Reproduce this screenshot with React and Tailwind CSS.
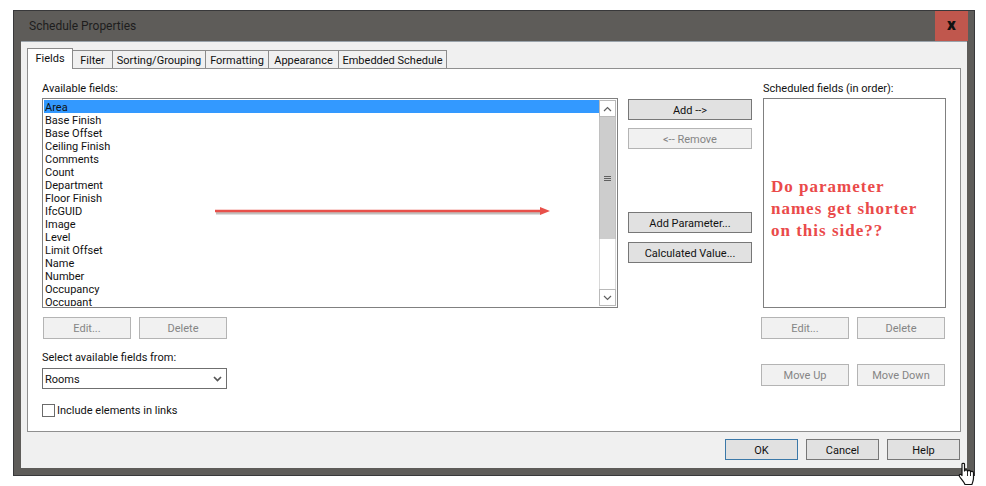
import React from 'react';

const fields = [
  'Area', 'Base Finish', 'Base Offset', 'Ceiling Finish', 'Comments', 'Count', 'Department', 'Floor Finish',
  'IfcGUID', 'Image', 'Level', 'Limit Offset', 'Name', 'Number', 'Occupancy', 'Occupant',
];

const tabs = [
  { label: 'Filter', width: 'w-[41px]' },
  { label: 'Sorting/Grouping', width: 'w-[94px]' },
  { label: 'Formatting', width: 'w-[64px]' },
  { label: 'Appearance', width: 'w-[71px]' },
  { label: 'Embedded Schedule', width: 'w-[109px]' },
];

function Btn({ children, disabled, primary, className = '' }) {
  const look = disabled
    ? 'bg-[#f1f1f1] border-[#b4b4b4] text-[#858585]'
    : primary
      ? 'bg-[#e1e1e1] border-[#3b78a8] text-[#111111]'
      : 'bg-[#e1e1e1] border-[#777777] text-[#111111]';
  return (
    <div className={`flex items-center justify-center border text-[11px] ${look} ${className}`}>
      {children}
    </div>
  );
}

function ScrollArrow({ d, className = '' }) {
  return (
    <div className={`flex items-center justify-center bg-white border border-[#b9b9b9] ${className}`}>
      <svg width="9" height="6" viewBox="0 0 9 6" fill="none" stroke="#606060" strokeWidth="1.2">
        <path d={d} />
      </svg>
    </div>
  );
}

export default function App() {
  return (
    <div
      className="relative w-[986px] h-[486px] overflow-hidden bg-white pt-[10px] pl-[13px] text-[#111111]"
      style={{ fontFamily: 'Roboto, sans-serif' }}
    >
      <div className="flex flex-col w-[962px] h-[466px] border border-[#38383a] bg-[#5e5c59]">
        {/* title bar */}
        <div className="flex justify-between h-[30px] shrink-0">
          <div className="pl-[15px] pt-[6px] text-[12px] leading-[18px] text-[#1d1d1d]">Schedule Properties</div>
          <div className="flex items-center justify-center w-[33px] h-[30px] mr-[6px] bg-[#c0574d] pb-[3px] text-[17px] font-black leading-none text-[#111111]">
            x
          </div>
        </div>

        {/* body */}
        <div className="flex flex-col h-[427px] mx-[7px] bg-[#f0f0f0] border-t border-[#9aa3ab] px-[6px]">
          <div className="flex items-end h-[26px] shrink-0 pl-0">
            <div className="relative z-10 flex items-start justify-center w-[46px] h-[21px] -mb-px border border-b-0 border-[#8b8b8b] bg-white pt-[2px] text-[11px]">
              Fields
            </div>
            {tabs.map((tab) => (
              <div
                key={tab.label}
                className={`flex items-center justify-center h-[18px] border border-b-0 border-[#8b8b8b] bg-[#f0f0f0] pt-[3px] text-[11px] whitespace-nowrap -ml-px first:ml-0 ${tab.width}`}
              >
                {tab.label}
              </div>
            ))}
          </div>

          {/* panel */}
          <div className="flex gap-[10px] w-[934px] h-[364px] shrink-0 border border-[#8f8f8f] bg-white pl-[14px] pt-[13px]">
            <div className="w-[576px] shrink-0">
              <div className="h-[16px] text-[11px] leading-[13px]">Available fields:</div>
              <div className="relative flex h-[210px] border border-[#808080] p-px overflow-hidden">
                <div className="flex-1 overflow-hidden text-[11px] leading-[15px]">
                  {fields.map((name, i) => (
                    <div key={name} className={`h-[13px] pl-px ${i === 0 ? 'bg-[#3399ff]' : ''}`}>
                      {name}
                    </div>
                  ))}
                </div>
                <div className="flex flex-col w-[17px] shrink-0">
                  <ScrollArrow d="M1 5 L4.5 1.5 L8 5" className="h-[17px]" />
                  <div className="flex flex-col items-center justify-center gap-px h-[122px] bg-[#cdcdcd] border-x border-[#c0c0c0]">
                    <div className="w-[7px] h-px bg-[#606060]" />
                    <div className="w-[7px] h-px bg-[#606060]" />
                    <div className="w-[7px] h-px bg-[#606060]" />
                  </div>
                  <div className="h-[50px] bg-white border-x border-[#d8d8d8]" />
                  <ScrollArrow d="M1 1 L4.5 4.5 L8 1" className="h-[17px]" />
                </div>
                {/* annotation arrow */}
                <svg className="absolute left-[172px] top-[105px]" width="340" height="16" viewBox="0 0 340 16">
                  <path d="M1 9 H326" stroke="#77706c" strokeOpacity="0.45" strokeWidth="3" />
                  <path d="M0 7 H326" stroke="#e8504a" strokeWidth="2.4" />
                  <path d="M325 3 L335 7 L325 11 Z" fill="#e8504a" />
                </svg>
              </div>
              <div className="flex gap-[8px] mt-[9px] ml-px">
                <Btn disabled className="w-[88px] h-[22px] pt-[2px]">Edit...</Btn>
                <Btn disabled className="w-[88px] h-[22px] pt-[2px]">Delete</Btn>
              </div>
              <div className="h-[16px] mt-[10px] text-[11px] leading-[18px]">Select available fields from:</div>
              <div className="flex items-center justify-between w-[185px] h-[21px] mt-[3px] border border-[#6f6f6f] bg-white pl-[2px] pr-[4px] text-[11px]">
                <span className="pt-[3px]">Rooms</span>
                <svg width="9" height="6" viewBox="0 0 9 6" fill="none" stroke="#555555" strokeWidth="1.7">
                  <path d="M1 1 L4.5 4.5 L8 1" />
                </svg>
              </div>
              <div className="flex items-center gap-[2px] mt-[14px] text-[11px] leading-[14px]">
                <span className="w-[13px] h-[13px] border border-[#6b6b6b] bg-white" />
                <span className="pt-px">Include elements in links</span>
              </div>
            </div>

            <div className="w-[124px] shrink-0 pt-[17px]">
              <Btn className="h-[21px] pt-[3px]">Add --&gt;</Btn>
              <Btn disabled className="h-[21px] mt-[8px] pt-[3px]">&lt;-- Remove</Btn>
              <Btn className="h-[21px] mt-[63px] pt-[3px]">Add Parameter...</Btn>
              <Btn className="h-[21px] mt-[9px] pt-[3px]">Calculated Value...</Btn>
            </div>

            <div className="w-[183px] shrink-0 ml-px">
              <div className="h-[16px] text-[11px] leading-[13px]">Scheduled fields (in order):</div>
              <div
                className="h-[210px] border border-[#808080] pl-[7px] pt-[77px] text-[17px] font-bold leading-[22px] tracking-[1px] text-[#ea4a4a]"
                style={{ fontFamily: '"Liberation Serif", serif' }}
              >
                Do parameter
                <br />
                names get shorter
                <br />
                on this side??
              </div>
              <div className="flex gap-[8px] mt-[9px] -ml-[2px]">
                <Btn disabled className="w-[88px] h-[22px] pt-[2px]">Edit...</Btn>
                <Btn disabled className="w-[88px] h-[22px] pt-[2px]">Delete</Btn>
              </div>
              <div className="flex gap-[8px] mt-[25px] -ml-[2px]">
                <Btn disabled className="w-[88px] h-[22px] pt-[2px]">Move Up</Btn>
                <Btn disabled className="w-[88px] h-[22px] pt-[2px]">Move Down</Btn>
              </div>
            </div>
          </div>

          {/* footer */}
          <div className="flex justify-end gap-[8px] pt-[7px] pr-px">
            <Btn primary className="w-[73px] h-[21px] pt-[3px]">OK</Btn>
            <Btn className="w-[73px] h-[21px] pt-[3px]">Cancel</Btn>
            <Btn className="w-[73px] h-[21px] pt-[3px]">Help</Btn>
          </div>
        </div>
      </div>

      {/* mouse cursor */}
      <svg className="absolute left-[958px] top-[462px]" width="20" height="24" viewBox="0 0 20 24">
        <path
          d="M4 2 C4 1 6.5 1 6.5 2 V9 C7 7.5 9.5 7.5 9.5 9.5 C10 8 12.5 8 12.5 10 C13 9 15.5 9 15.5 11 V16 C15.5 19 14.5 20 14 22.5 H7 C6 20 3 17 1.5 14.5 C0.5 12.5 2.5 11.5 4 13.5 Z"
          fill="#ffffff"
          stroke="#111111"
          strokeWidth="1.2"
          strokeLinejoin="round"
        />
        <path d="M9.5 9.5 V14 M12.5 10 V14" stroke="#111111" strokeWidth="0.9" fill="none" />
      </svg>
    </div>
  );
}
